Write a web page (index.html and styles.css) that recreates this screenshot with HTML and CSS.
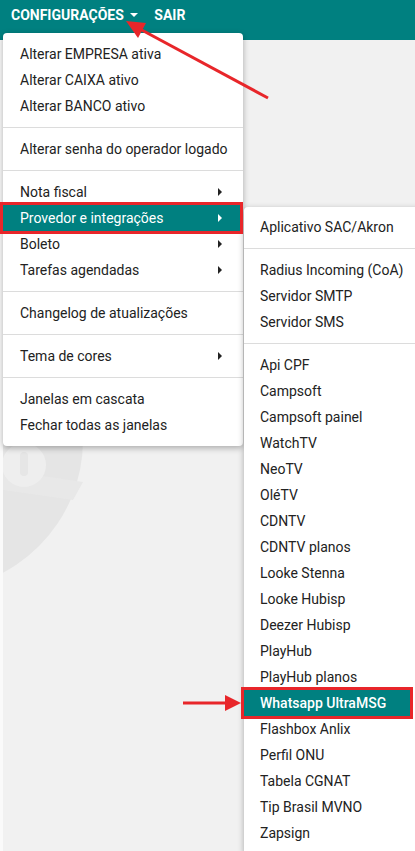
FILE: index.html
```html
<!DOCTYPE html>
<html lang="pt-BR">
<head>
    <meta charset="UTF-8">
    <meta name="viewport" content="width=device-width, initial-scale=1.0">
    <title>Configurações</title>
    <link rel="stylesheet" href="styles.css">
</head>
<body>
    <div class="topbar">
        <span class="top-link">CONFIGURAÇÕES <span class="caret"></span></span>
        <span class="top-link">SAIR</span>
    </div>

    <div class="workspace">
        <svg class="watermark" width="120" height="260" viewBox="0 0 120 260">
            <circle cx="-70" cy="70" r="150" fill="#e5e5e5"/>
            <path d="M0 120 L70 130 L80 112 L0 100 Z" fill="#e8e8e8"/>
            <circle cx="21" cy="95" r="22" fill="#eeeeee"/>
            <rect x="17" y="82" width="8" height="24" rx="4" fill="#e6e6e6"/>
        </svg>
    </div>

    <ul class="menu main-menu">
        <li class="item">Alterar EMPRESA ativa</li>
        <li class="item">Alterar CAIXA ativo</li>
        <li class="item">Alterar BANCO ativo</li>
        <li class="sep"></li>
        <li class="item">Alterar senha do operador logado</li>
        <li class="sep"></li>
        <li class="item sub">Nota fiscal</li>
        <li class="item sub active marked">Provedor e integrações</li>
        <li class="item sub">Boleto</li>
        <li class="item sub">Tarefas agendadas</li>
        <li class="sep"></li>
        <li class="item">Changelog de atualizações</li>
        <li class="sep"></li>
        <li class="item sub">Tema de cores</li>
        <li class="sep"></li>
        <li class="item">Janelas em cascata</li>
        <li class="item">Fechar todas as janelas</li>
    </ul>

    <ul class="menu sub-menu">
        <li class="item">Aplicativo SAC/Akron</li>
        <li class="sep"></li>
        <li class="item">Radius Incoming (CoA)</li>
        <li class="item">Servidor SMTP</li>
        <li class="item">Servidor SMS</li>
        <li class="sep"></li>
        <li class="item">Api CPF</li>
        <li class="item">Campsoft</li>
        <li class="item">Campsoft painel</li>
        <li class="item">WatchTV</li>
        <li class="item">NeoTV</li>
        <li class="item">OléTV</li>
        <li class="item">CDNTV</li>
        <li class="item">CDNTV planos</li>
        <li class="item">Looke Stenna</li>
        <li class="item">Looke Hubisp</li>
        <li class="item">Deezer Hubisp</li>
        <li class="item">PlayHub</li>
        <li class="item">PlayHub planos</li>
        <li class="item active marked strong">Whatsapp UltraMSG</li>
        <li class="item">Flashbox Anlix</li>
        <li class="item">Perfil ONU</li>
        <li class="item">Tabela CGNAT</li>
        <li class="item">Tip Brasil MVNO</li>
        <li class="item">Zapsign</li>
    </ul>

    <!-- setas de anotação -->
    <svg class="annotations" width="415" height="851" viewBox="0 0 415 851">
        <line x1="268" y1="98" x2="138" y2="28" stroke="#e8262a" stroke-width="3"/>
        <polygon points="126,21 146,23 138,38" fill="#e8262a"/>
        <line x1="183" y1="703" x2="228" y2="703" stroke="#e8262a" stroke-width="3"/>
        <polygon points="241,703 225,695 225,711" fill="#e8262a"/>
    </svg>
</body>
</html>
```

FILE: styles.css
```css
body {
    margin: 0;
    height: 851px;
    overflow: hidden;
    font-family: Roboto, "Liberation Sans", Arial, sans-serif;
    font-size: 14px;
    color: #222;
    background-color: #f1f1f1;
    position: relative;
}
.topbar {
    height: 40px;
    box-sizing: border-box;
    padding: 6px 11px 0;
    background-color: #008080;
    display: flex;
    gap: 16px;
}
.top-link {
    color: #fff;
    font-weight: bold;
    line-height: 18px;
}
.caret {
    display: inline-block;
    width: 0;
    height: 0;
    margin-left: 3px;
    vertical-align: 3px;
    border-left: 4px solid transparent;
    border-right: 4px solid transparent;
    border-top: 4px solid #fff;
}
.workspace {
    height: 811px;
    border-left: 3px solid #fafafa;
    position: relative;
    overflow: hidden;
}
.watermark {
    position: absolute;
    left: 0;
    top: 330px;
}
.menu {
    list-style: none;
    margin: 0;
    padding: 8px 0;
    background-color: #fff;
    border-radius: 4px;
    box-shadow: 0 2px 6px rgba(0, 0, 0, 0.3);
    position: absolute;
}
.main-menu {
    left: 3px;
    top: 33px;
    width: 240px;
}
.sub-menu {
    left: 244px;
    top: 207px;
    width: 190px;
    padding-top: 7px;
}
.item {
    height: 26px;
    line-height: 26px;
    padding-left: 17px;
    white-space: nowrap;
    position: relative;
}
.sub-menu .item {
    padding-left: 16px;
}
.sub::after {
    content: "";
    position: absolute;
    right: 21px;
    top: 9px;
    border-left: 4px solid #222;
    border-top: 4px solid transparent;
    border-bottom: 4px solid transparent;
}
.sep {
    height: 1px;
    margin: 8px 0;
    background-color: #dcdcdc;
}
.active {
    background-color: #008080;
    color: #fff;
}
.active.sub::after {
    border-left-color: #fff;
    right: 18px;
}
.marked {
    box-shadow: 0 0 0 3px #e8262a;
    z-index: 1;
}
.main-menu .marked {
    margin-right: 3px;
}
.sub-menu .marked {
    margin-right: 24px;
}
.strong {
    font-weight: 500;
}
.annotations {
    position: absolute;
    left: 0;
    top: 0;
    pointer-events: none;
}
```
